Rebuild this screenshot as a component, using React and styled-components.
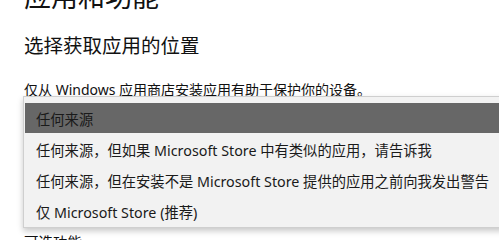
import React from 'react'
import styled, { createGlobalStyle } from 'styled-components'

const GlobalStyle = createGlobalStyle`
  html, body {
    margin: 0;
    padding: 0;
    background: #ffffff;
    overflow: hidden;
  }
  body {
    font-family: "Noto Sans", "Noto Sans CJK SC", sans-serif;
    color: #111;
  }
`

const Page = styled.div`
  width: 499px;
  height: 240px;
  padding: 0 24px;
  box-sizing: border-box;
  overflow: hidden;
`

const Title = styled.h1`
  margin: -21px 0 0;
  font-size: 27px;
  font-weight: 400;
  line-height: 36px;
`

const Heading = styled.h2`
  margin: 17px 0 0;
  font-size: 19.5px;
  font-weight: 400;
  line-height: 28px;
`

const Description = styled.p`
  margin: 20px 0 0;
  font-size: 14px;
  line-height: 20px;
  white-space: nowrap;
`

const SelectArea = styled.div`
  position: relative;
  margin-top: -4px;
  height: 123px;
`

const Popup = styled.ul`
  position: absolute;
  top: 0;
  left: -1px;
  width: 490px;
  margin: 0;
  padding: 6px 1px 0;
  list-style: none;
  background: #f2f2f2;
  border: 1px solid #cfcfcf;
  box-shadow: 0 3px 6px rgba(0, 0, 0, 0.22);
`

const Option = styled.li`
  height: ${p => (p.$active ? 30 : 31)}px;
  margin-bottom: ${p => (p.$active ? 1 : 0)}px;
  padding-left: 11px;
  display: flex;
  align-items: center;
  font-size: 14.3px;
  white-space: nowrap;
  color: #1a1a1a;
  background: ${p => (p.$active ? '#676767' : 'transparent')};
`

const Link = styled.div`
  margin-top: 13px;
  font-size: 14.5px;
  line-height: 20px;
`

const options = [
  '任何来源',
  '任何来源，但如果 Microsoft Store 中有类似的应用，请告诉我',
  '任何来源，但在安装不是 Microsoft Store 提供的应用之前向我发出警告',
  '仅 Microsoft Store (推荐)',
]

const App = () => {
  return (
    <Page>
      <GlobalStyle />
      <Title>应用和功能</Title>
      <Heading>选择获取应用的位置</Heading>
      <Description>仅从 Windows 应用商店安装应用有助于保护你的设备。</Description>
      <SelectArea>
        <Popup>
          {options.map((o, i) => (
            <Option key={i} $active={i === 0}>{o}</Option>
          ))}
        </Popup>
      </SelectArea>
      <Link>可选功能</Link>
    </Page>
  )
}

export default App
